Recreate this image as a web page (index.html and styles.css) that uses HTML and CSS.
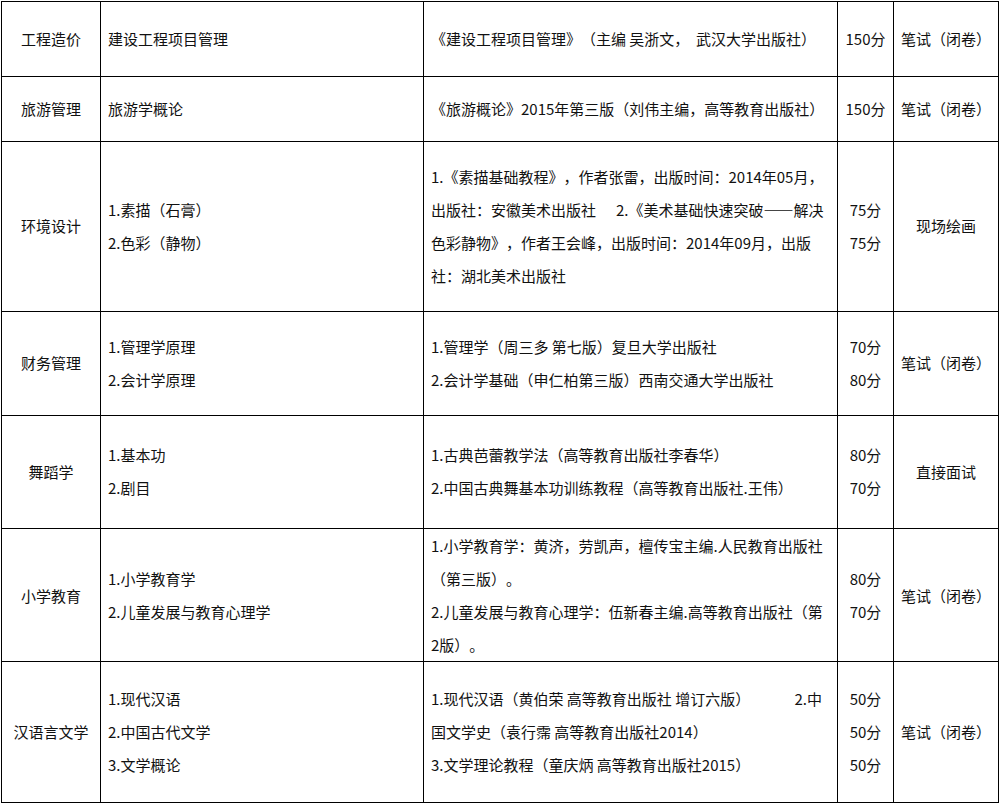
FILE: index.html
```html
<!DOCTYPE html>
<html lang="zh-CN">
<head>
<meta charset="utf-8">
<title>考试科目</title>
<link rel="stylesheet" href="styles.css">
</head>
<body>
<table class="exam">
  <colgroup>
    <col class="c-major">
    <col class="c-subject">
    <col class="c-book">
    <col class="c-score">
    <col class="c-mode">
  </colgroup>
  <tbody>
    <tr class="r1">
      <td class="center">工程造价</td>
      <td class="left">建设工程项目管理</td>
      <td class="left">《建设工程项目管理》（主编 吴浙文，&nbsp; 武汉大学出版社）</td>
      <td class="center">150分</td>
      <td class="center">笔试（闭卷）</td>
    </tr>
    <tr class="r2">
      <td class="center">旅游管理</td>
      <td class="left">旅游学概论</td>
      <td class="left">《旅游概论》2015年第三版（刘伟主编，高等教育出版社）</td>
      <td class="center">150分</td>
      <td class="center">笔试（闭卷）</td>
    </tr>
    <tr class="r3">
      <td class="center">环境设计</td>
      <td class="left"><p>1.素描（石膏）</p><p>2.色彩（静物）</p></td>
      <td class="left">
        <p>1.《素描基础教程》，作者张雷，出版时间：2014年05月，</p>
        <p>出版社：安徽美术出版社<span class="gap">2.《美术基础快速突破——解决</span></p>
        <p>色彩静物》，作者王会峰，出版时间：2014年09月，出版</p>
        <p>社：湖北美术出版社</p>
      </td>
      <td class="center"><p>75分</p><p>75分</p></td>
      <td class="center">现场绘画</td>
    </tr>
    <tr class="r4">
      <td class="center">财务管理</td>
      <td class="left"><p>1.管理学原理</p><p>2.会计学原理</p></td>
      <td class="left"><p>1.管理学（周三多 第七版）复旦大学出版社</p><p>2.会计学基础（申仁柏第三版）西南交通大学出版社</p></td>
      <td class="center"><p>70分</p><p>80分</p></td>
      <td class="center">笔试（闭卷）</td>
    </tr>
    <tr class="r5">
      <td class="center">舞蹈学</td>
      <td class="left"><p>1.基本功</p><p>2.剧目</p></td>
      <td class="left"><p>1.古典芭蕾教学法（高等教育出版社李春华）</p><p>2.中国古典舞基本功训练教程（高等教育出版社.王伟）</p></td>
      <td class="center"><p>80分</p><p>70分</p></td>
      <td class="center">直接面试</td>
    </tr>
    <tr class="r6">
      <td class="center">小学教育</td>
      <td class="left"><p>1.小学教育学</p><p>2.儿童发展与教育心理学</p></td>
      <td class="left">
        <p>1.小学教育学：黄济，劳凯声，檀传宝主编.人民教育出版社</p>
        <p>（第三版）。</p>
        <p>2.儿童发展与教育心理学：伍新春主编.高等教育出版社（第</p>
        <p>2版）。</p>
      </td>
      <td class="center"><p>80分</p><p>70分</p></td>
      <td class="center">笔试（闭卷）</td>
    </tr>
    <tr class="r7">
      <td class="center">汉语言文学</td>
      <td class="left"><p>1.现代汉语</p><p>2.中国古代文学</p><p>3.文学概论</p></td>
      <td class="left">
        <p class="split"><span>1.现代汉语（黄伯荣 高等教育出版社 增订六版）</span><span>2.中</span></p>
        <p>国文学史（袁行霈 高等教育出版社2014）</p>
        <p>3.文学理论教程（童庆炳 高等教育出版社2015）</p>
      </td>
      <td class="center"><p>50分</p><p>50分</p><p>50分</p></td>
      <td class="center">笔试（闭卷）</td>
    </tr>
  </tbody>
</table>
</body>
</html>
```
FILE: styles.css
```css
html, body {
  margin: 0;
  padding: 0;
  background: #ffffff;
}

body {
  font-family: "Noto Sans CJK SC", "Microsoft YaHei", sans-serif;
  font-size: 15px;
  color: #111111;
  text-spacing-trim: space-all;
}

.exam {
  margin: 1px 0 0 1px;
  width: 998px;
  table-layout: fixed;
  border-collapse: separate;
  border-spacing: 0;
  border-top: 1px solid #000;
  border-left: 1px solid #000;
}

.c-major { width: 99px; }
.c-subject { width: 323px; }
.c-book { width: 414px; }
.c-score { width: 56px; }
.c-mode { width: 105px; }

.exam td {
  box-sizing: border-box;
  border-right: 1px solid #000;
  border-bottom: 1px solid #000;
  vertical-align: middle;
  line-height: 33px;
  padding: 0 0 2px 0;
  white-space: nowrap;
  overflow: hidden;
  text-spacing-trim: space-all;
}

.exam td.center {
  text-align: center;
}

.exam td.left {
  text-align: left;
  padding: 0 6px 2px 7px;
}

.exam .r6 td {
  padding-bottom: 0;
}

.exam p {
  margin: 0;
}

.exam .gap {
  margin-left: 20px;
}

.exam .split {
  display: flex;
  justify-content: space-between;
  padding-right: 9px;
}

.r1 { height: 75px; }
.r2 { height: 65px; }
.r3 { height: 170px; }
.r4 { height: 104px; }
.r5 { height: 113px; }
.r6 { height: 133px; }
.r7 { height: 141px; }
```
